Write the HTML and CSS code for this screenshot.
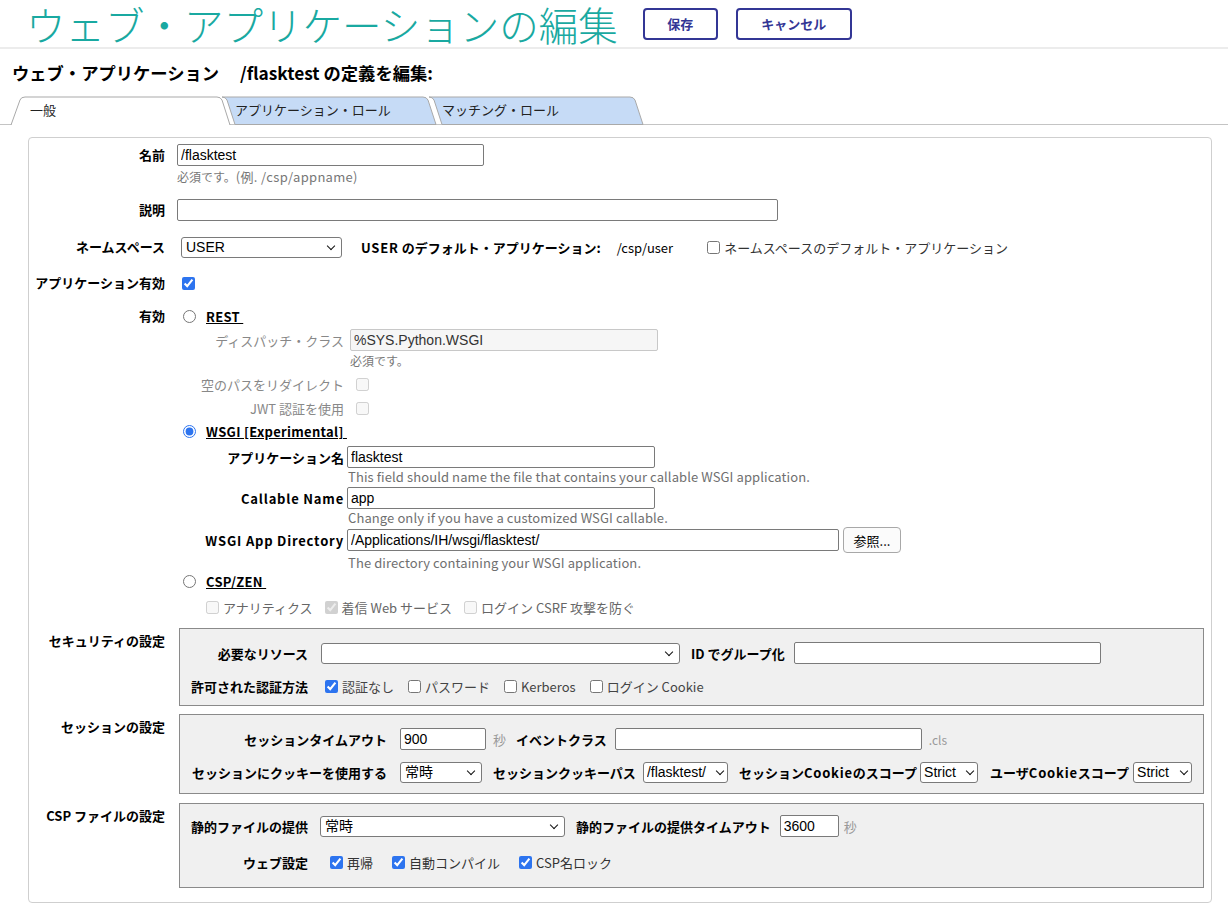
FILE: index.html
```html
<!DOCTYPE html>
<html lang="ja">
<head>
<meta charset="utf-8">
<title>ウェブ・アプリケーションの編集</title>
<link rel="stylesheet" href="styles.css">
</head>
<body>
<div class="header">
  <h1 class="title">ウェブ・アプリケーションの編集</h1>
  <button class="hbtn b-save">保存</button>
  <button class="hbtn b-cancel">キャンセル</button>
</div>
<div class="subtitle"><span>ウェブ・アプリケーション</span><span class="subname">/flasktest の定義を編集:</span></div>

<div class="tabs">
  <div class="tab tab1">
    <svg class="tabbg" width="221" height="29" viewBox="0 0 221 29"><path d="M1,29.5 L10,4 Q11,1 15,1 L207,1 Q210.5,1 212,4 L220,29.5 Z" fill="#fff"/><path d="M1,29 L10,4 Q11,1 15,1 L207,1 Q210.5,1 212,4 L220,29" fill="none" stroke="#a9a9a9"/></svg>
    <span class="tabtxt t1">一般</span>
  </div>
  <div class="tab tab2">
    <svg class="tabbg" width="216" height="29" viewBox="0 0 216 29"><path d="M1,1 Q4.5,1 6,4 L14,28.5 L215,28.5 L207,4 Q205.5,1 202,1 Z" fill="#c6dbf6" stroke="#a9a9a9"/></svg>
    <span class="tabtxt">アプリケーション・ロール</span>
  </div>
  <div class="tab tab3">
    <svg class="tabbg" width="216" height="29" viewBox="0 0 216 29"><path d="M1,1 Q4.5,1 6,4 L14,28.5 L215,28.5 L207,4 Q205.5,1 202,1 Z" fill="#c6dbf6" stroke="#a9a9a9"/></svg>
    <span class="tabtxt">マッチング・ロール</span>
  </div>
</div>

<div class="panel">
  <div class="row">
    <div class="lbl">名前</div>
    <div class="ctl">
      <input class="txt w307" type="text" value="/flasktest">
      <div class="hint">必須です。<span class="hl">(例. /csp/appname)</span></div>
    </div>
  </div>

  <div class="row m14">
    <div class="lbl">説明</div>
    <div class="ctl"><input class="txt w601" type="text" value=""></div>
  </div>

  <div class="row c m15">
    <div class="lbl">ネームスペース</div>
    <span class="selw ns"><select class="sel w161"><option>USER</option></select></span>
    <span class="b nsinfo"><span class="lat">USER</span> のデフォルト・アプリケーション:</span>
    <span class="nspath">/csp/user</span>
    <input class="cb nscb" type="checkbox">
    <span class="cbl nsl">ネームスペースのデフォルト・アプリケーション</span>
  </div>

  <div class="row c m14">
    <div class="lbl">アプリケーション有効</div>
    <input class="cb appen" type="checkbox" checked>
  </div>

  <div class="row m11">
    <div class="lbl">有効</div>
    <div class="ctl">
      <div class="ohead"><input class="rd" type="radio" name="t"><span class="oname">REST&nbsp;</span></div>
      <div class="srow m2"><span class="slbl dis">ディスパッチ・クラス</span><input class="txt dtxt w308" type="text" value="%SYS.Python.WSGI" disabled></div>
      <div class="hint shint1 m2">必須です。</div>
      <div class="srow m4"><span class="slbl dis">空のパスをリダイレクト</span><input class="cb scb" type="checkbox" disabled></div>
      <div class="srow m2"><span class="slbl dis">JWT 認証を使用</span><input class="cb scb" type="checkbox" disabled></div>

      <div class="ohead m1"><input class="rd" type="radio" name="t" checked><span class="oname">WSGI [Experimental]&nbsp;</span></div>
      <div class="srow m4"><span class="slbl b">アプリケーション名</span><input class="txt wtxt w308" type="text" value="flasktest"></div>
      <div class="hint en shint m1">This field should name the file that contains your callable WSGI application.</div>
      <div class="srow m2"><span class="slbl b lat">Callable Name</span><input class="txt wtxt w308" type="text" value="app"></div>
      <div class="hint en shint m1">Change only if you have a customized WSGI callable.</div>
      <div class="srow tall m1"><span class="slbl b lat">WSGI App Directory</span><input class="txt wtxt w492" type="text" value="/Applications/IH/wsgi/flasktest/"><button class="browse">参照...</button></div>
      <div class="hint en shint m2">The directory containing your WSGI application.</div>

      <div class="ohead short"><input class="rd" type="radio" name="t"><span class="oname">CSP/ZEN&nbsp;</span></div>
      <div class="zrow m7">
        <input class="cb zcb1" type="checkbox" disabled><span class="zl">アナリティクス</span>
        <input class="cb zcb2" type="checkbox" checked disabled><span class="zl">着信 Web サービス</span>
        <input class="cb zcb3" type="checkbox" disabled><span class="zl">ログイン CSRF 攻撃を防ぐ</span>
      </div>
    </div>
  </div>

  <div class="row m12">
    <div class="lbl slabel">セキュリティの設定</div>
    <div class="box sec">
      <div class="brow">
        <span class="blbl w118">必要なリソース</span>
        <span class="selw ml13"><select class="sel w359"><option></option></select></span>
        <span class="b ml11">ID でグループ化</span>
        <input class="txt w307 ml9" type="text" value="">
      </div>
      <div class="brow g11">
        <span class="blbl w118">許可された認証方法</span>
        <input class="cb ml17" type="checkbox" checked><span class="al">認証なし</span>
        <input class="cb ml14" type="checkbox"><span class="al">パスワード</span>
        <input class="cb ml14" type="checkbox"><span class="al">Kerberos</span>
        <input class="cb ml14" type="checkbox"><span class="al">ログイン Cookie</span>
      </div>
    </div>
  </div>

  <div class="row m8">
    <div class="lbl slabel">セッションの設定</div>
    <div class="box ses">
      <div class="brow">
        <span class="blbl w197">セッションタイムアウト</span>
        <input class="txt w86 ml13" type="text" value="900">
        <span class="unit ml7">秒</span>
        <span class="b ml10">イベントクラス</span>
        <input class="txt w307 ml8" type="text" value="">
        <span class="unit cls ml7">.cls</span>
      </div>
      <div class="brow g11">
        <span class="blbl w197">セッションにクッキーを使用する</span>
        <span class="selw ml13"><select class="sel w82"><option>常時</option></select></span>
        <span class="b ml11">セッションクッキーパス</span>
        <span class="selw ml7"><select class="sel w85 tight"><option>/flasktest/</option></select></span>
        <span class="b ml11">セッション<span class="lat">Cookie</span>のスコープ</span>
        <span class="selw ml3"><select class="sel w58 tight"><option>Strict</option></select></span>
        <span class="b ml12">ユーザ<span class="lat">Cookie</span>スコープ</span>
        <span class="selw ml4"><select class="sel w59 tight"><option>Strict</option></select></span>
      </div>
    </div>
  </div>

  <div class="row m9">
    <div class="lbl slabel">CSP ファイルの設定</div>
    <div class="box csp">
      <div class="brow">
        <span class="blbl w118">静的ファイルの提供</span>
        <span class="selw ml12"><select class="sel w245"><option>常時</option></select></span>
        <span class="b ml11">静的ファイルの提供タイムアウト</span>
        <input class="txt w59 ml9" type="text" value="3600">
        <span class="unit ml5">秒</span>
      </div>
      <div class="brow g14">
        <span class="blbl w118">ウェブ設定</span>
        <input class="cb ml22" type="checkbox" checked><span class="wl">再帰</span>
        <input class="cb ml19" type="checkbox" checked><span class="wl">自動コンパイル</span>
        <input class="cb ml19" type="checkbox" checked><span class="wl">CSP名ロック</span>
      </div>
    </div>
  </div>
</div>
</body>
</html>
```

FILE: styles.css
```css
* { box-sizing: border-box; }
body {
  margin: 0;
  font-family: "Noto Sans CJK JP", "Noto Sans", sans-serif;
  font-size: 13px;
  color: #000;
  background: #fff;
}
.b { font-weight: 700; }
.lat { letter-spacing: 0.8px; }

/* base controls first so that modifiers below can override */
.cb {
  flex: none;
  width: 13px;
  height: 13px;
  margin: 0;
  accent-color: #2d74ef;
}
.rd {
  flex: none;
  width: 13px;
  height: 13px;
  margin: 0 0 0 6px;
  accent-color: #2d74ef;
}
.txt {
  height: 22px;
  margin: 0;
  padding: 0 3px;
  border: 1px solid #7a7a7a;
  border-radius: 2px;
  background: #fff;
  color: #000;
  font: 14px "Liberation Sans", "Noto Sans CJK JP", sans-serif;
}

.header {
  display: flex;
  align-items: center;
  height: 49px;
  padding-left: 26px;
  border-bottom: 2px solid #ececec;
}
.title {
  margin: 0;
  font-size: 39.5px;
  font-weight: 300;
  line-height: 47px;
  color: #19a9a1;
  white-space: nowrap;
}
.hbtn {
  height: 32px;
  padding: 0;
  border: 2px solid #333695;
  border-radius: 4px;
  background: #fff;
  color: #333695;
  font-family: "Noto Sans CJK JP", sans-serif;
  font-size: 13px;
  font-weight: 700;
}
.b-save { width: 75px; margin-left: 25px; }
.b-cancel { width: 116px; margin-left: 18px; }

.subtitle {
  margin: 13px 0 0 12px;
  font-size: 17.3px;
  font-weight: 700;
  line-height: 22px;
  white-space: nowrap;
}
.subname { margin-left: 21px; }

.tabs {
  display: flex;
  align-items: flex-start;
  height: 29px;
  margin-top: 12px;
  padding-left: 10px;
  border-bottom: 1px solid #c4c4c4;
}
.tab { position: relative; height: 29px; }
.tab1 { width: 221px; z-index: 2; }
.tab2 { width: 216px; margin-left: -10px; }
.tab3 { width: 216px; margin-left: -9px; }
.tabbg { position: absolute; left: 0; top: 0; }
.tabtxt {
  position: relative;
  display: block;
  padding-left: 14px;
  line-height: 28px;
  color: #222;
  white-space: nowrap;
}
.tabtxt.t1 { padding-left: 20px; }

.panel {
  margin: 12px 16px 0 28px;
  padding: 6px 0 14px 0;
  border: 1px solid #cfcfcf;
  border-radius: 4px;
}
.row { display: flex; align-items: flex-start; }
.row.c { align-items: center; min-height: 22px; }
.lbl {
  flex: none;
  width: 136px;
  margin-right: 12px;
  text-align: right;
  font-weight: 700;
  line-height: 22px;
  white-space: nowrap;
}
.slabel { padding-top: 2px; }
.ctl { display: flex; flex-direction: column; align-items: flex-start; }

.m1 { margin-top: 1px; } .m2 { margin-top: 2px; } .m4 { margin-top: 4px; }
.m7 { margin-top: 7px; } .m8 { margin-top: 8px; } .m9 { margin-top: 9px; }
.m11 { margin-top: 11px; } .m12 { margin-top: 12px; } .m14 { margin-top: 14px; }
.m15 { margin-top: 15px; }

.dtxt {
  background: #f6f6f6;
  border-color: #c8c8c8;
  color: #333;
}
.w59 { width: 59px; } .w86 { width: 86px; } .w307 { width: 307px; }
.w308 { width: 308px; } .w492 { width: 492px; } .w601 { width: 601px; }

.hint {
  margin-top: 3px;
  font-size: 12px;
  line-height: 16px;
  color: #777;
  white-space: nowrap;
}
.hint .hl { font-size: 13px; letter-spacing: 0.3px; }
.hint.en { font-size: 13px; letter-spacing: 0.1px; color: #6f6f6f; }
.ctl .hint.m1 { margin-top: 1px; }
.ctl .hint.m2 { margin-top: 2px; }
.shint1 { margin-left: 173px; }
.shint { margin-left: 171px; }

.selw { position: relative; display: inline-block; flex: none; height: 21px; }
.selw::after {
  content: "";
  position: absolute;
  right: 8px;
  top: 6px;
  width: 5px;
  height: 5px;
  border-right: 1.6px solid #111;
  border-bottom: 1.6px solid #111;
  transform: rotate(45deg);
  pointer-events: none;
}
.sel {
  display: block;
  height: 21px;
  margin: 0;
  padding: 0 18px 0 4px;
  appearance: none;
  -webkit-appearance: none;
  border: 1px solid #7a7a7a;
  border-radius: 3px;
  background: #fff;
  color: #000;
  font: 14px "Liberation Sans", "Noto Sans CJK JP", sans-serif;
}
.sel.tight { padding: 0 14px 0 3px; }
.selw:has(.tight)::after { right: 5px; }
.w58 { width: 58px; } .w59 { width: 59px; } .w82 { width: 82px; } .w85 { width: 85px; }
.w161 { width: 161px; } .w245 { width: 245px; } .w359 { width: 359px; }

.ns { margin-left: 4px; }
.nsinfo { margin-left: 19px; white-space: nowrap; }
.nspath { margin-left: 16px; white-space: nowrap; }
.row .nscb { margin-left: 34px; }
.nsl { margin-left: 4px; color: #333; white-space: nowrap; }
.row .appen { margin-left: 5px; }

.ohead { display: flex; align-items: center; height: 22px; }
.ohead.short { height: 20px; }
.oname {
  margin-left: 10px;
  font-weight: 700;
  letter-spacing: 0.3px;
  text-decoration: underline;
  white-space: nowrap;
}
.srow { display: flex; align-items: center; height: 22px; }
.srow.tall { height: 26px; }
.slbl { flex: none; width: 167px; text-align: right; white-space: nowrap; }
.slbl.dis { color: #888; }
.srow .dtxt { margin-left: 6px; }
.srow .wtxt { margin-left: 3px; }
.srow .scb { margin-left: 12px; }
.browse {
  flex: none;
  width: 58px;
  height: 26px;
  margin-left: 4px;
  padding: 0;
  border: 1px solid #a8a8a8;
  border-radius: 4px;
  background: #fbfbfb;
  color: #000;
  font-family: "Noto Sans CJK JP", sans-serif;
  font-size: 13px;
}

.zrow { display: flex; align-items: center; height: 18px; color: #666; white-space: nowrap; }
.zrow .zcb1 { margin-left: 29px; }
.zrow .zcb2 { margin-left: 12px; }
.zrow .zcb3 { margin-left: 12px; }
.zl { margin-left: 4px; }

.box {
  flex: none;
  width: 1025px;
  margin-left: 2px;
  border: 1px solid #8a8a8a;
  background: #f0f0f0;
  padding-left: 10px;
}
.box.sec { padding-top: 13px; padding-bottom: 8px; }
.box.ses { padding-top: 13px; padding-bottom: 10px; }
.box.csp { padding-top: 11px; padding-bottom: 14px; }
.brow { display: flex; align-items: center; height: 22px; white-space: nowrap; }
.brow > * { flex: none; }
.g11 { margin-top: 11px; }
.g14 { margin-top: 14px; }
.blbl { text-align: right; font-weight: 700; }
.w118 { width: 118px; } .w197 { width: 197px; }
.brow .ml3 { margin-left: 3px; } .brow .ml4 { margin-left: 4px; } .brow .ml5 { margin-left: 5px; }
.brow .ml7 { margin-left: 7px; } .brow .ml8 { margin-left: 8px; } .brow .ml9 { margin-left: 9px; }
.brow .ml10 { margin-left: 10px; } .brow .ml11 { margin-left: 11px; } .brow .ml12 { margin-left: 12px; }
.brow .ml13 { margin-left: 13px; } .brow .ml14 { margin-left: 14px; } .brow .ml17 { margin-left: 17px; }
.brow .ml19 { margin-left: 19px; } .brow .ml22 { margin-left: 22px; }
.al { margin-left: 4px; color: #444; }
.wl { margin-left: 4px; color: #333; }
.unit { color: #999; }
.cls { font-size: 12px; }
```
